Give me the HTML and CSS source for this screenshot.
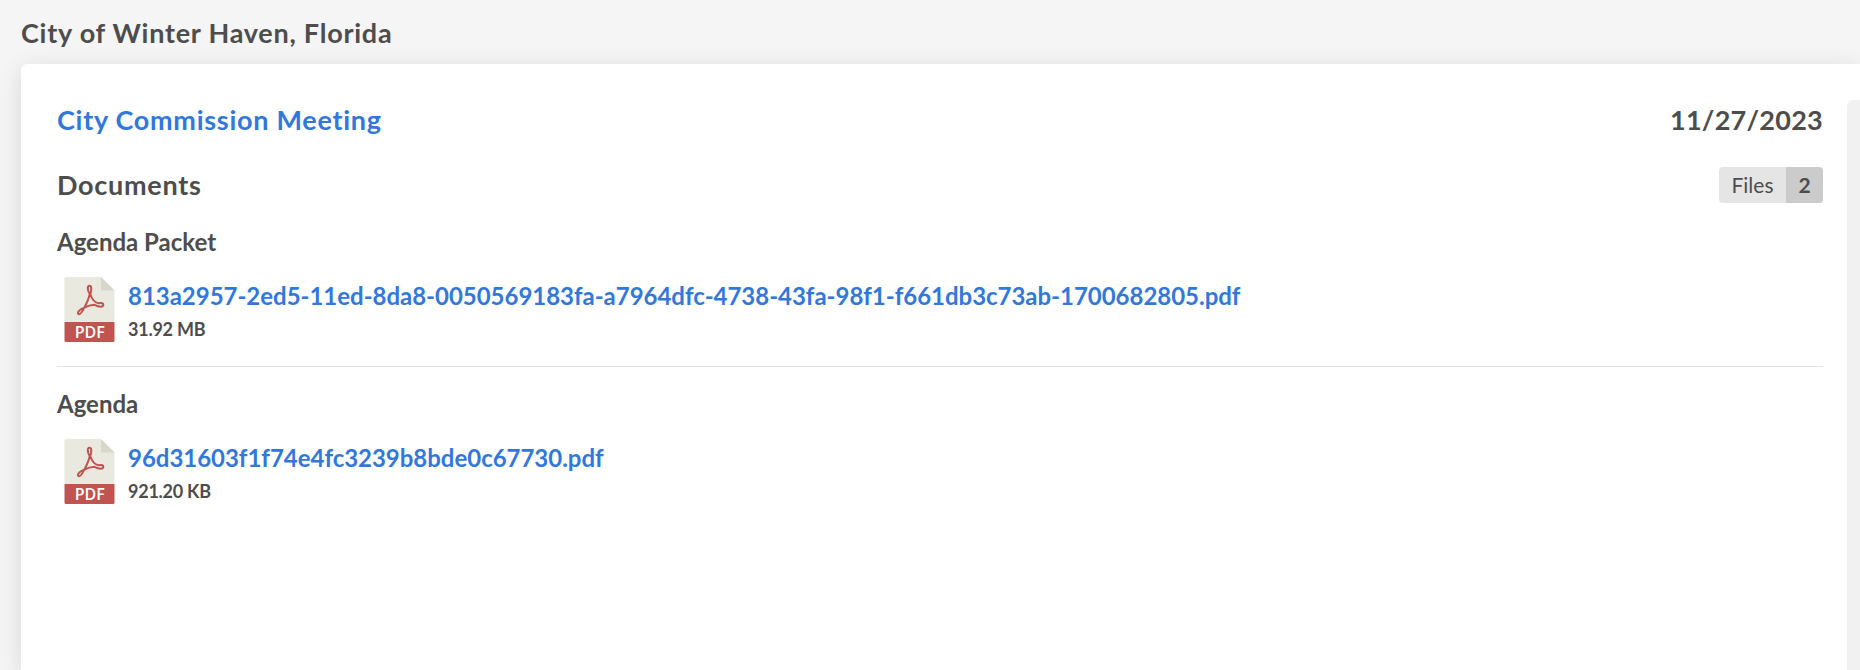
FILE: index.html
```html
<!DOCTYPE html>
<html lang="en">
<head>
    <meta charset="UTF-8">
    <meta name="viewport" content="width=device-width, initial-scale=1.0">
    <title>City of Winter Haven, Florida</title>
    <link rel="stylesheet" href="styles.css">
</head>
<body>
    <!-- Shared file icon -->
    <svg class="sprite" aria-hidden="true">
        <symbol id="pdf" viewBox="0 0 50 65">
            <path fill="#e9e9e0" d="M1.5 0H36.5L50 13.5V45H0V1.5Q0 0 1.5 0Z"/>
            <path fill="#d9d7ca" d="M36.5 0V13.5H50Z"/>
            <path fill="#bf5450" d="M0 45H50V63.5Q50 65 48.5 65H1.5Q0 65 0 63.5Z"/>
            <path fill="none" stroke="#bf5450" stroke-width="2" stroke-linejoin="round" d="M24.8 8.8C27.3 8.8 27.3 12 25.8 17.2C27.5 22.5 30.5 25.5 34 26.2C37.5 25.4 38.9 26.5 38.8 28C38.6 30.3 34.8 30.3 30 27.8C26.5 28 22.5 29.2 19.8 30.6C17.5 35.3 15.5 37.8 14.1 37.2C12.4 36.3 13.9 32.7 19.8 30.6C22 26.5 24.4 21.5 25.2 17.2C22.5 12.5 22.8 8.8 24.8 8.8Z"/>
            <text class="pdf-label" x="25.3" y="61" text-anchor="middle">PDF</text>
        </symbol>
    </svg>

    <h1 class="page-title">City of Winter Haven, Florida</h1>

    <div class="container">
        <div class="main-content">
            <div class="row row--meeting">
                <h2 class="heading"><a href="#">City Commission Meeting</a></h2>
                <span class="heading heading--date">11/27/2023</span>
            </div>
            <div class="row row--documents">
                <h2 class="heading">Documents</h2>
                <div class="tags">
                    <span class="tags__label">Files</span>
                    <span class="tags__count">2</span>
                </div>
            </div>

            <div class="document">
                <h3 class="document__title">Agenda Packet</h3>
                <div class="file">
                    <svg class="file__icon"><use href="#pdf"/></svg>
                    <div class="file__info">
                        <a class="file__name" href="#">813a2957-2ed5-11ed-8da8-0050569183fa-a7964dfc-4738-43fa-98f1-f661db3c73ab-1700682805.pdf</a>
                        <p class="file__size">31.92 MB</p>
                    </div>
                </div>
            </div>
            <div class="document">
                <h3 class="document__title">Agenda</h3>
                <div class="file">
                    <svg class="file__icon"><use href="#pdf"/></svg>
                    <div class="file__info">
                        <a class="file__name" href="#">96d31603f1f74e4fc3239b8bde0c67730.pdf</a>
                        <p class="file__size">921.20 KB</p>
                    </div>
                </div>
            </div>
        </div>
        <div class="side-panel"></div>
    </div>
</body>
</html>
```

FILE: styles.css
```css
* {
    margin: 0;
    padding: 0;
    box-sizing: border-box;
}

body {
    height: 100vh;
    overflow: hidden;
    display: flex;
    flex-direction: column;
    background-color: #f5f5f5;
    color: #4d4d4d;
    font-family: Lato, sans-serif;
}

a {
    color: #3278dc;
    text-decoration: none;
}

.sprite {
    display: none;
}

.page-title {
    height: 64px;
    padding: 15px 0 0 21px;
    font-size: 27px;
    line-height: 36px;
    font-weight: bold;
    letter-spacing: 0.75px;
}

.container {
    flex: 1;
    display: flex;
    margin-left: 21px;
    padding: 36px 0 0 36px;
    background-color: #fff;
    border-radius: 6px 0 0 0;
    box-shadow: 0 5px 24px rgba(0, 0, 0, 0.12);
}

.main-content {
    width: 1766px;
}

.side-panel {
    flex: 1;
    margin-left: 24px;
    background-color: #f1f1f1;
    border-radius: 6px 0 0 0;
}

.row {
    display: flex;
    justify-content: space-between;
    align-items: center;
    height: 36px;
}

.row--meeting {
    margin-top: 2px;
}

.row--documents {
    margin-top: 29px;
}

.heading {
    font-size: 27px;
    line-height: 36px;
    font-weight: bold;
    letter-spacing: 0.72px;
}

.heading--date {
    letter-spacing: 0.25px;
}

.tags {
    display: flex;
    height: 36px;
    line-height: 36px;
    font-size: 21px;
    border-radius: 4px;
    overflow: hidden;
}

.tags__label {
    width: 67px;
    text-align: center;
    background-color: #e5e5e5;
}

.tags__count {
    width: 37px;
    text-align: center;
    font-weight: bold;
    background-color: #cbcbcb;
}

.document {
    padding-top: 21px;
    height: 164px;
    border-bottom: 1px solid #e3e3e3;
}

.document:last-child {
    padding-top: 19px;
    border-bottom: none;
}

.document__title {
    font-size: 24px;
    line-height: 36px;
    font-weight: bold;
}

.file {
    display: flex;
    margin-top: 17px;
    padding-left: 7px;
}

.file__icon {
    width: 51px;
    height: 65px;
}

.pdf-label {
    fill: #fff;
    font-family: "Open Sans", sans-serif;
    font-size: 16px;
    font-weight: 600;
}

.file__info {
    margin-left: 13px;
    padding-top: 1px;
}

.file__name {
    display: block;
    font-size: 24px;
    line-height: 36px;
    font-weight: bold;
    letter-spacing: -0.025px;
}

.file__size {
    font-size: 18px;
    line-height: 30px;
    font-weight: bold;
    letter-spacing: -0.25px;
}
```
